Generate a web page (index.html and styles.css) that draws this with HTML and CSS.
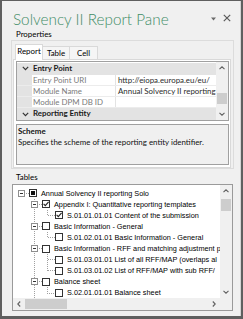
FILE: index.html
```html
<!DOCTYPE html>
<html>
<head>
<meta charset="utf-8">
<link rel="stylesheet" href="styles.css">
</head>
<body>
<div class="pane">
  <div class="titlebar">
    <div class="title">Solvency II Report Pane</div>
    <div class="ctrls">
      <svg class="dd" width="6" height="4" viewBox="0 0 6 4"><path d="M0 0.5 H5 L2.5 3.5 Z" fill="#6a6a6a"/></svg>
      <svg class="close" width="8" height="8" viewBox="0 0 8 8"><path d="M0.8 0.8 L7.2 7.2 M7.2 0.8 L0.8 7.2" stroke="#5a5a5a" stroke-width="1.2"/></svg>
    </div>
  </div>
  <div class="label">Properties</div>
  <div class="group">
    <div class="tabs">
      <div class="tab active">Report</div>
      <div class="tab">Table</div>
      <div class="tab">Cell</div>
    </div>
    <div class="tabpage">
      <div class="grid">
        <div class="rows">
          <div class="cat">
            <span class="marg"><svg width="7" height="5" viewBox="0 0 7 5"><path d="M0.8 0.8 L3.5 3.6 L6.2 0.8" stroke="#333" stroke-width="1.2" fill="none"/></svg></span>
            <span class="cname">Entry Point</span>
          </div>
          <div class="prop">
            <span class="marg"></span>
            <span class="pname">Entry Point URI</span>
            <span class="pval">http://eiopa.europa.eu/eu/</span>
          </div>
          <div class="prop">
            <span class="marg"></span>
            <span class="pname">Module Name</span>
            <span class="pval">Annual Solvency II reporting</span>
          </div>
          <div class="prop">
            <span class="marg"></span>
            <span class="pname">Module DPM DB ID</span>
            <span class="pval"></span>
          </div>
          <div class="cat">
            <span class="marg"><svg width="7" height="5" viewBox="0 0 7 5"><path d="M0.8 0.8 L3.5 3.6 L6.2 0.8" stroke="#333" stroke-width="1.2" fill="none"/></svg></span>
            <span class="cname">Reporting Entity</span>
          </div>
        </div>
        <div class="vscroll gridscroll">
          <div class="arrow"><svg width="6" height="4" viewBox="0 0 6 4"><path d="M0.5 3.2 L3 0.8 L5.5 3.2" stroke="#606060" stroke-width="1.1" fill="none"/></svg></div>
          <div class="track"><div class="thumb"></div></div>
          <div class="arrow"><svg width="6" height="4" viewBox="0 0 6 4"><path d="M0.5 0.8 L3 3.2 L5.5 0.8" stroke="#606060" stroke-width="1.1" fill="none"/></svg></div>
        </div>
      </div>
      <div class="desc">
        <div class="dtitle">Scheme</div>
        <div class="dtext">Specifies the scheme of the reporting entity identifier.</div>
      </div>
    </div>
  </div>
  <div class="label tables-label">Tables</div>
  <div class="tree">
    <div class="tree-top">
      <div class="tree-view">
        <svg class="lines" width="207" height="113" viewBox="0 0 207 113">
          <g stroke="#a0a0a0" stroke-width="1" stroke-dasharray="1 1" fill="none" shape-rendering="crispEdges">
            <path d="M11 8.5 H16"/>
            <path d="M21.5 14 V113"/>
            <path d="M24 19.5 H29 M24 41.5 H29 M24 63.5 H29 M24 96.5 H29"/>
            <path d="M34.5 25 V30.5 H42"/>
            <path d="M34.5 47 V52.5 H42"/>
            <path d="M34.5 69 V85.5 M34.5 74.5 H42 M34.5 85.5 H42"/>
            <path d="M34.5 102 V108.5 H42"/>
          </g>
          <g stroke="#8e8e8e" fill="#fff" shape-rendering="crispEdges">
            <rect x="5.5" y="5.5" width="6" height="6"/>
            <rect x="18.5" y="16.5" width="6" height="6"/>
            <rect x="18.5" y="38.5" width="6" height="6"/>
            <rect x="18.5" y="60.5" width="6" height="6"/>
            <rect x="18.5" y="93.5" width="6" height="6"/>
          </g>
          <g stroke="#333" shape-rendering="crispEdges">
            <path d="M7 8.5 H10"/>
            <path d="M20 19.5 H23 M20 41.5 H23 M20 63.5 H23 M20 96.5 H23"/>
          </g>
        </svg>
        <div class="node l0"><span class="cb ind"></span><span class="nt">Annual Solvency II reporting Solo</span></div>
        <div class="node l1"><span class="cb"><svg width="6" height="6" viewBox="0 0 6 6"><path d="M0.6 2.8 L2.3 4.6 L5.6 0.9" stroke="#222" stroke-width="1.1" fill="none"/></svg></span><span class="nt">Appendix I: Quantitative reporting templates</span></div>
        <div class="node l2"><span class="cb"><svg width="6" height="6" viewBox="0 0 6 6"><path d="M0.6 2.8 L2.3 4.6 L5.6 0.9" stroke="#222" stroke-width="1.1" fill="none"/></svg></span><span class="nt">S.01.01.01.01 Content of the submission</span></div>
        <div class="node l1"><span class="cb"></span><span class="nt">Basic Information - General</span></div>
        <div class="node l2"><span class="cb"></span><span class="nt">S.01.02.01.01 Basic Information - General</span></div>
        <div class="node l1"><span class="cb"></span><span class="nt">Basic Information - RFF and matching adjustment p</span></div>
        <div class="node l2"><span class="cb"></span><span class="nt">S.01.03.01.01 List of all RFF/MAP (overlaps al</span></div>
        <div class="node l2"><span class="cb"></span><span class="nt">S.01.03.01.02 List of RFF/MAP with sub RFF/</span></div>
        <div class="node l1"><span class="cb"></span><span class="nt">Balance sheet</span></div>
        <div class="node l2"><span class="cb"></span><span class="nt">S.02.01.01.01 Balance sheet</span></div>
      </div>
      <div class="vscroll treescroll">
        <div class="arrow"><svg width="6" height="4" viewBox="0 0 6 4"><path d="M0.5 3.2 L3 0.8 L5.5 3.2" stroke="#606060" stroke-width="1.1" fill="none"/></svg></div>
        <div class="track"><div class="thumb"></div></div>
        <div class="arrow"><svg width="6" height="4" viewBox="0 0 6 4"><path d="M0.5 0.8 L3 3.2 L5.5 0.8" stroke="#606060" stroke-width="1.1" fill="none"/></svg></div>
      </div>
    </div>
    <div class="tree-bottom">
      <div class="hscroll">
        <div class="harrow"><svg width="4" height="6" viewBox="0 0 4 6"><path d="M3.2 0.5 L0.8 3 L3.2 5.5" stroke="#606060" stroke-width="1.1" fill="none"/></svg></div>
        <div class="htrack"><div class="hthumb"></div></div>
        <div class="harrow"><svg width="4" height="6" viewBox="0 0 4 6"><path d="M0.8 0.5 L3.2 3 L0.8 5.5" stroke="#606060" stroke-width="1.1" fill="none"/></svg></div>
      </div>
      <div class="corner"></div>
    </div>
  </div>
</div>
</body>
</html>
```

FILE: styles.css
```css
* { box-sizing: border-box; }
html, body { margin: 0; padding: 0; }
body {
  width: 243px;
  height: 319px;
  background: #5f5f5f;
  overflow: hidden;
  font-family: "Lato", "Open Sans", sans-serif;
}
.pane {
  margin: 1px 0 0 2px;
  width: 239px;
  height: 315px;
  background: #f0f0f0;
  border-right: 1px solid #d4d4d4;
  display: flex;
  flex-direction: column;
}
.titlebar {
  display: flex;
  align-items: flex-start;
  padding: 8px 0 0 11px;
  height: 28px;
}
.title {
  flex: 1;
  font-size: 15.3px;
  line-height: 20px;
  font-weight: 300;
  color: #3f8c66;
  white-space: nowrap;
}
.ctrls {
  display: flex;
  align-items: center;
  gap: 6px;
  margin-top: 5px;
  margin-right: 9px;
}
.ctrls .dd { margin-top: 1px; }
.label {
  font-size: 7.9px;
  line-height: 10px;
  height: 10px;
  padding-left: 14px;
  color: #000;
}
.group {
  margin: 1px 0 0 9px;
  width: 223px;
  height: 129px;
  border: 1px solid #dcdcdc;
  padding: 3px 0 0 1px;
}
.tabs {
  display: flex;
  align-items: flex-end;
  height: 15px;
  padding-left: 2px;
  position: relative;
  z-index: 1;
}
.tab {
  height: 13px;
  border: 1px solid #d9d9d9;
  border-bottom: none;
  background: #f5f5f5;
  font-size: 7.9px;
  line-height: 12px;
  padding: 0;
  width: 28px;
  text-align: center;
  margin-left: -1px;
  white-space: nowrap;
}
.tab:first-child { margin-left: 0; }
.tab:last-child { width: 29px; }
.tab.active {
  background: #fff;
  line-height: 13px;
  margin-bottom: -1px;
  height: 16px;
}
.tabpage {
  width: 218px;
  height: 109px;
  border: 1px solid #d9d9d9;
  background: #fff;
  padding: 1px 0 0 2px;
}
.grid {
  width: 213px;
  height: 60px;
  border: 1px solid #a0a0a0;
  display: flex;
  background: #fff;
}
.rows {
  width: 199px;
  flex: none;
  padding-top: 1.3px;
  overflow: hidden;
  font-size: 7.9px;
}
.cat, .prop {
  display: flex;
  height: 11.3px;
  line-height: 11.3px;
  white-space: nowrap;
}
.cat { background: #e3e3e3; }
.marg {
  width: 15px;
  flex: none;
  background: #e3e3e3;
  display: flex;
  align-items: center;
  justify-content: center;
}
.marg svg { margin-left: 1px; }
.cname {
  font-weight: 700;
  padding-left: 1px;
  color: #1a1a1a;
}
.prop { border-bottom: 1px solid #ececec; }
.pname {
  width: 84px;
  flex: none;
  padding-left: 1px;
  color: #7a7a7a;
  border-right: 1px solid #e3e3e3;
  overflow: hidden;
}
.pval {
  width: 100px;
  flex: none;
  padding-left: 2px;
  color: #2b2b2b;
  overflow: hidden;
}
.vscroll {
  width: 12px;
  flex: none;
  background: #f0f0f0;
  display: flex;
  flex-direction: column;
}
.vscroll .arrow {
  height: 12px;
  flex: none;
  display: flex;
  align-items: center;
  justify-content: center;
}
.vscroll .track {
  flex: 1;
  display: flex;
  flex-direction: column;
}
.gridscroll .track { padding-top: 19px; }
.gridscroll .thumb {
  height: 11px;
  margin: 0 1px;
  background: #cdcdcd;
}
.desc {
  margin-top: 3px;
  width: 213px;
  height: 41px;
  border: 1px solid #a0a0a0;
  background: #f0f0f0;
  padding: 1px 0 0 1px;
  font-size: 7.9px;
  line-height: 11px;
  color: #111;
}
.dtitle { font-weight: 700; }
.tables-label {
  margin-top: 3px;
}
.tree {
  margin: 2px 0 0 10px;
  width: 221px;
  height: 127px;
  border: 1px solid #9a9a9a;
  background: #fff;
  display: flex;
  flex-direction: column;
}
.tree-top {
  display: flex;
  height: 113px;
}
.tree-view {
  width: 207px;
  height: 113px;
  flex: none;
  position: relative;
  overflow: hidden;
  padding-top: 2.5px;
  font-family: "Liberation Sans", Arial, sans-serif;
  font-size: 7.3px;
  color: #000;
}
.lines {
  position: absolute;
  left: 0;
  top: 0;
}
.node {
  position: relative;
  display: flex;
  align-items: center;
  height: 11.1px;
  white-space: nowrap;
}
.node.l0 { padding-left: 16px; }
.node.l1 { padding-left: 29px; }
.node.l2 { padding-left: 42px; }
.cb {
  width: 8px;
  height: 8px;
  flex: none;
  border: 1px solid #333;
  background: #fff;
  margin-right: 4px;
  display: flex;
  align-items: center;
  justify-content: center;
}
.cb.ind::after {
  content: "";
  width: 4px;
  height: 4px;
  background: #111;
}
.nt { line-height: 11.1px; }
.treescroll {
  width: 12px;
  height: 113px;
}
.treescroll .track { padding-top: 2px; }
.treescroll .thumb {
  height: 12px;
  margin: 0 1px;
  background: #cdcdcd;
}
.tree-bottom {
  display: flex;
  height: 12px;
}
.hscroll {
  width: 207px;
  flex: none;
  display: flex;
  background: #f0f0f0;
}
.harrow {
  width: 12px;
  flex: none;
  display: flex;
  align-items: center;
  justify-content: center;
}
.htrack {
  flex: 1;
  padding: 1px 0;
}
.hthumb {
  width: 42px;
  height: 100%;
  background: #cdcdcd;
}
.corner {
  width: 12px;
  background: #f0f0f0;
}
```
